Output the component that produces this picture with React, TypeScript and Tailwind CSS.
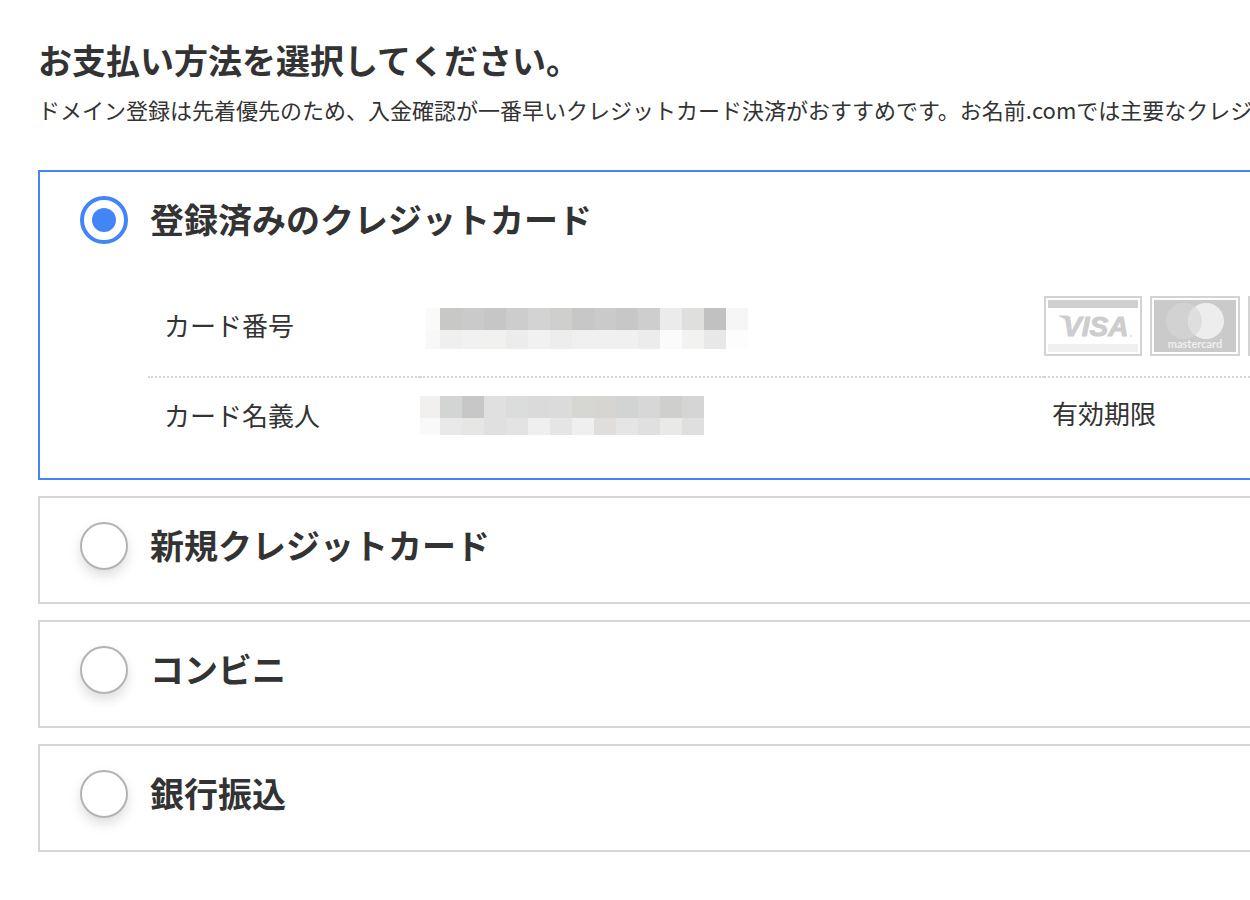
import { useState } from "react";
import type { ReactNode } from "react";

const methods = [
  { id: "registered", label: "登録済みのクレジットカード" },
  { id: "new-card", label: "新規クレジットカード" },
  { id: "convenience", label: "コンビニ" },
  { id: "bank", label: "銀行振込" },
];

const numberMosaic = {
  top: [
    "bg-[#fafaf9]", "bg-[#c8c8c7]", "bg-[#cacaca]", "bg-[#c6c6c6]", "bg-[#cdcdcd]",
    "bg-[#d3d3d3]", "bg-[#cfcfcd]", "bg-[#c7c7c7]", "bg-[#cacaca]", "bg-[#c7c7c7]",
    "bg-[#cecece]", "bg-[#ebebeb]", "bg-[#dfdfdd]", "bg-[#c1c1c1]", "bg-[#f6f6f6]",
  ],
  bottom: [
    "bg-[#f9f7f8]", "bg-[#efefef]", "bg-[#f1f1f1]", "bg-[#f1f1f0]", "bg-[#ececec]",
    "bg-[#f1f1f1]", "bg-[#ededed]", "bg-[#f0f0f0]", "bg-[#f0f0f0]", "bg-[#f0f0f0]",
    "bg-[#ececec]", "bg-[#fbfbfb]", "bg-[#f2f2f1]", "bg-[#e8e8e8]", "bg-[#fdfdfd]",
  ],
};

const nameMosaic = {
  top: [
    "bg-[#f1f0ee]", "bg-[#d3d4d4]", "bg-[#c7c7c7]", "bg-[#e0e0e0]", "bg-[#dadddc]",
    "bg-[#dadada]", "bg-[#dbdbdb]", "bg-[#d6d6d3]", "bg-[#d6d5d2]", "bg-[#d1d4d3]",
    "bg-[#d7d7d8]", "bg-[#cfcfcd]", "bg-[#d5d5d5]",
  ],
  bottom: [
    "bg-[#f9f9f9]", "bg-[#e9e9e9]", "bg-[#e6e6e4]", "bg-[#e0e0e0]", "bg-[#e3e3e3]",
    "bg-[#efefef]", "bg-[#e5e5e5]", "bg-[#efefef]", "bg-[#dfdedc]", "bg-[#e5e5e5]",
    "bg-[#e0e0e0]", "bg-[#e9e9e7]", "bg-[#dfdfdf]",
  ],
};

export default function App() {
  const [selected, setSelected] = useState("registered");

  return (
    <main className="min-h-screen overflow-hidden bg-white pt-9 pb-12 pl-[38px] font-['Noto_Sans_CJK_JP',sans-serif] text-[#333]">
      <h1 className="text-[34px] leading-[48px] font-bold whitespace-nowrap">
        お支払い方法を選択してください。
      </h1>
      <p className="mt-2 text-[22px] leading-[34px] whitespace-nowrap">
        ドメイン登録は先着優先のため、入金確認が一番早いクレジットカード決済がおすすめです。お名前.comでは主要なクレジ
      </p>

      <div className="mt-11 flex flex-col gap-4">
        {methods.map((method) => (
          <PaymentOption
            key={method.id}
            id={method.id}
            label={method.label}
            checked={selected === method.id}
            onSelect={() => setSelected(method.id)}
          >
            {method.id === "registered" && <RegisteredCard />}
          </PaymentOption>
        ))}
      </div>
    </main>
  );
}

function PaymentOption({
  id,
  label,
  checked,
  onSelect,
  children,
}: Readonly<{
  id: string;
  label: string;
  checked: boolean;
  onSelect: () => void;
  children?: ReactNode;
}>) {
  return (
    <section
      className={`border-2 border-r-0 pt-6 pl-10 ${
        checked ? "border-[#4285f4]" : "border-[#d6d6d6]"
      }`}
    >
      <div className="flex items-start gap-[22px] pb-8">
        <input
          type="radio"
          name="payment"
          id={id}
          checked={checked}
          onChange={onSelect}
          className="size-12 shrink-0 appearance-none rounded-full border-2 border-[#b3b3b3] bg-white shadow-[0_6px_12px_rgba(0,0,0,0.13)] checked:border-4 checked:border-[#4285f4] checked:bg-[#4285f4] checked:bg-clip-content checked:p-2 checked:shadow-none"
        />
        <label
          htmlFor={id}
          className="text-[34px] leading-[46px] font-bold whitespace-nowrap"
        >
          {label}
        </label>
      </div>
      {children}
    </section>
  );
}

function RegisteredCard() {
  return (
    <div className="pb-[26px] pl-[68px]">
      <table className="w-full table-fixed border-collapse text-left text-[26px] leading-9 whitespace-nowrap">
        <colgroup>
          <col className="w-[272px]" />
          <col className="w-[624px]" />
          <col />
        </colgroup>
        <tbody>
          <tr className="h-[101px] border-b-2 border-dotted border-[#d6d6d6]">
            <th scope="row" className="pb-[2px] pl-4 font-normal">
              カード番号
            </th>
            <td className="pt-1 pl-[6px]">
              <Mosaic rows={numberMosaic} first="w-[14px]" last="h-[19px]" />
            </td>
            <td>
              <div className="flex gap-2">
                <VisaLogo />
                <MastercardLogo />
                <div className="h-[60px] w-[90px] shrink-0 border-2 border-[#d3d3d3]" />
              </div>
            </td>
          </tr>
          <tr className="h-[75px]">
            <th scope="row" className="pl-4 font-normal">
              カード名義人
            </th>
            <td>
              <Mosaic rows={nameMosaic} first="w-5" last="h-[17px]" />
            </td>
            <td className="pb-1 pl-2">有効期限</td>
          </tr>
        </tbody>
      </table>
    </div>
  );
}

function Mosaic({
  rows,
  first,
  last,
}: Readonly<{
  rows: { top: string[]; bottom: string[] };
  first: string;
  last: string;
}>) {
  return (
    <div aria-hidden="true">
      {[rows.top, rows.bottom].map((cells, row) => (
        <div key={row} className={`flex ${row === 0 ? "h-[22px]" : last}`}>
          {cells.map((color, i) => (
            <div
              key={i}
              className={`shrink-0 ${i === 0 ? first : "w-[22px]"} ${color}`}
            />
          ))}
        </div>
      ))}
    </div>
  );
}

function VisaLogo() {
  return (
    <svg
      role="img"
      aria-label="VISA"
      className="h-[60px] w-[98px] shrink-0"
      viewBox="0 0 98 60"
    >
      <rect x="1" y="1" width="96" height="58" fill="#fff" stroke="#d3d3d3" strokeWidth="2" />
      <rect x="4" y="4" width="90" height="8" fill="#d0d0d0" />
      <rect x="4" y="48" width="90" height="8" fill="#f0f0f0" />
      <path d="M15 19.500h9l4 12c-3-6-7-9-13-11z" fill="#cdcdcd" />
      <text
        x="19"
        y="40"
        fill="#cdcdcd"
        stroke="#cdcdcd"
        strokeWidth="1"
        fontFamily="Liberation Sans, sans-serif"
        fontSize="28"
        fontStyle="italic"
        fontWeight="700"
      >
        VISA
      </text>
      <circle cx="87" cy="40" r="1" fill="#dcdcdc" />
    </svg>
  );
}

function MastercardLogo() {
  return (
    <svg
      role="img"
      aria-label="mastercard"
      className="h-[60px] w-[90px] shrink-0"
      viewBox="0 0 90 60"
    >
      <rect x="1" y="1" width="88" height="58" fill="#fff" stroke="#d3d3d3" strokeWidth="2" />
      <rect x="4" y="4" width="82" height="52" fill="#cacaca" />
      <circle cx="34" cy="25" r="18" fill="#d2d2d2" />
      <circle cx="56" cy="25" r="18" fill="#ededed" />
      <path d="M45 10.800a18 18 0 0 1 0 28.400a18 18 0 0 1 0-28.400z" fill="#dedede" />
      <text
        x="45"
        y="52"
        fill="#efefef"
        fontFamily="Lato, sans-serif"
        fontSize="11"
        fontWeight="700"
        textAnchor="middle"
      >
        mastercard
      </text>
    </svg>
  );
}
